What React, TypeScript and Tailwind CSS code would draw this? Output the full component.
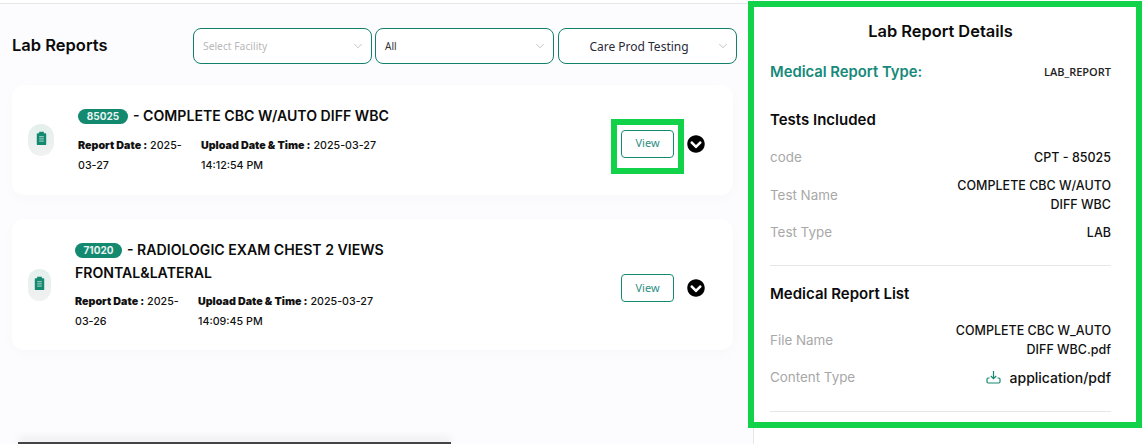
import { ChevronDown } from "lucide-react";
import { FaChevronCircleDown } from "react-icons/fa";

type Report = {
  code: string;
  badge: string;
  title: string[];
  reportDate: string[];
  upload: string[];
  highlight?: boolean;
};

const reports: Report[] = [
  {
    code: "85025",
    badge: "w-[50px]",
    title: ["- COMPLETE CBC W/AUTO DIFF WBC"],
    reportDate: ["2025-", "03-27"],
    upload: ["2025-03-27", "14:12:54 PM"],
    highlight: true,
  },
  {
    code: "71020",
    badge: "w-[47px]",
    title: ["- RADIOLOGIC EXAM CHEST 2 VIEWS", "FRONTAL&LATERAL"],
    reportDate: ["2025-", "03-26"],
    upload: ["2025-03-27", "14:09:45 PM"],
  },
];

function ClipboardIcon() {
  return (
    <svg width="11" height="14" viewBox="0 0 14 16" preserveAspectRatio="none">
      <path d="M2 2.500h2V.8h6v1.700h2a1 1 0 0 1 1 1V15a1 1 0 0 1-1 1H2a1 1 0 0 1-1-1V3.500a1 1 0 0 1 1-1z" fill="#13896f" />
      <path d="M4 6.500h6M4 9h6M4 11.500h6" stroke="#cfe6df" strokeWidth="1" />
    </svg>
  );
}

function DownloadIcon() {
  return (
    <svg width="15" height="15" viewBox="0 0 15 15" fill="none" stroke="#13896f" strokeWidth="1.2">
      <path d="M7.500 1v7.500M4.800 6l2.700 2.700L10.200 6" />
      <path d="M3.500 8H2.200a1.200 1.200 0 0 0-1.200 1.200v2.600A1.200 1.200 0 0 0 2.200 13h10.600a1.200 1.200 0 0 0 1.200-1.200V9.200A1.200 1.200 0 0 0 12.800 8H11.500" />
    </svg>
  );
}

function Select({ label, className }: { label: string; className: string }) {
  return (
    <div className="relative flex h-9 w-[179px] items-center rounded-lg border border-[#13806c] bg-white pt-[1px] font-['Noto_Sans',sans-serif]">
      <span className={className}>{label}</span>
      <ChevronDown size={14} strokeWidth={1} className="absolute right-[6px] top-[10px] text-[#9a9a9a]" />
    </div>
  );
}

function ReportCard({ report }: { report: Report }) {
  const twoLine = report.title.length > 1;
  return (
    <div
      className={`flex items-center rounded-xl bg-white shadow-[0_4px_14px_rgba(0,0,0,0.02)] ${
        twoLine ? "h-[131px]" : "h-[110px]"
      }`}
    >
      <div
        className={`ml-4 flex h-8 shrink-0 items-center justify-center rounded-full bg-gradient-to-b from-[#e4f0ed] to-[#f1f1f1] pb-1 ${
          twoLine ? "w-[23px]" : "w-[26px]"
        }`}
      >
        <ClipboardIcon />
      </div>
      <div className={`ml-6 w-[315px] ${twoLine ? "" : "mb-[1px]"}`}>
        <div className="text-[14.1px] font-semibold leading-[23px] text-[#0b0b0b]">
          <span
            className={`mr-[5px] inline-block h-[15px] rounded-full bg-[#13896f] text-center align-[1px] text-[10px] font-bold leading-[15px] text-[#e8f4f1] ${report.badge}`}
          >
            {report.code}
          </span>
          {report.title[0]}
          {twoLine && <div>{report.title[1]}</div>}
        </div>
        <div
          className={`flex text-[10.7px] font-medium leading-[20px] text-[#111] ${twoLine ? "mt-2" : "mt-[9px]"}`}
        >
          <div className="w-[123px]">
            <span className="font-black">Report Date :</span> {report.reportDate[0]}
            <br />
            {report.reportDate[1]}
          </div>
          <div>
            <span className="font-black">Upload Date &amp; Time :</span> {report.upload[0]}
            <br />
            {report.upload[1]}
          </div>
        </div>
      </div>
      <div className="ml-auto mr-[28px] mt-[7px] flex items-center">
        <div className="relative">
          <button className="block h-7 w-[53px] rounded border border-[#13896f] bg-white font-['Noto_Sans',sans-serif] text-[11px] text-[#2b8f82]">
            View
          </button>
          {report.highlight && (
            <div className="absolute -bottom-4 -left-[10px] -right-[10px] -top-[11px] border-[6px] border-[#12d24a]" />
          )}
        </div>
        <FaChevronCircleDown size={18} className="ml-[13px] text-black" />
      </div>
    </div>
  );
}

function Row({ label, value }: { label: string; value: React.ReactNode }) {
  return (
    <div className="flex items-center justify-between text-[13.4px] leading-[19px]">
      <span className="text-[#a8a8a8]">{label}</span>
      <div className="w-[190px] text-right text-[12.5px] font-medium text-[#111]">{value}</div>
    </div>
  );
}

export default function App() {
  return (
    <div className="relative flex h-[444px] w-[1143px] overflow-hidden bg-white font-[Inter,sans-serif]">
      <div className="mt-[3px] w-[753px] shrink-0 border-t border-[#e5e7eb] bg-[#fcfcfe]">
        <div className="flex h-[81px] items-start pl-3 pt-6">
          <h1 className="mt-[5px] w-[181px] text-[16.5px] font-semibold text-[#0b0b0b]">Lab Reports</h1>
          <div className="flex">
            <Select label="Select Facility" className="pl-[9px] text-[10.3px] text-[#b8b8b8]" />
            <div className="ml-[3px]">
              <Select label="All" className="pl-[9px] text-[10px] text-[#333]" />
            </div>
            <div className="ml-1">
              <Select label="Care Prod Testing" className="w-[160px] text-center text-[12px] text-[#2a2a3a]" />
            </div>
          </div>
        </div>
        <div className="flex w-[733px] flex-col gap-[24px] pl-3">
          {reports.map((r) => (
            <ReportCard key={r.code} report={r} />
          ))}
        </div>
      </div>

      <div className="w-[390px] border-l border-[#e5e7eb] bg-white pl-4 pr-8 pt-[21px]">
        <h2 className="text-center text-[16.4px] font-semibold leading-5 text-[#0b0b0b]">Lab Report Details</h2>
        <div className="mt-[21px] flex items-center justify-between leading-5">
          <span className="text-[14.8px] font-semibold text-[#16897a]">Medical Report Type:</span>
          <span className="font-['Open_Sans',sans-serif] text-[11px] font-semibold text-[#222]">LAB_REPORT</span>
        </div>
        <h3 className="mt-[28px] text-[15px] font-semibold leading-5 text-[#0b0b0b]">Tests Included</h3>
        <div className="mt-[18px] flex flex-col gap-[9px]">
          <Row label="code" value="CPT - 85025" />
          <Row
            label="Test Name"
            value={
              <>
                COMPLETE CBC W/AUTO
                <br />
                DIFF WBC
              </>
            }
          />
          <Row label="Test Type" value="LAB" />
        </div>
        <div className="mt-[23px] border-t border-[#e5e7eb]" />
        <h3 className="mt-[18px] text-[15px] font-semibold leading-5 text-[#0b0b0b]">Medical Report List</h3>
        <div className="mt-[17px] flex flex-col gap-[9px]">
          <Row
            label="File Name"
            value={
              <>
                COMPLETE CBC W_AUTO
                <br />
                DIFF WBC.pdf
              </>
            }
          />
          <Row
            label="Content Type"
            value={
              <span className="flex items-center justify-end gap-[9px] text-[14px]">
                <DownloadIcon />
                application/pdf
              </span>
            }
          />
        </div>
        <div className="mt-[24px] border-t border-[#e5e7eb]" />
      </div>

      <div className="absolute left-[748px] top-[1px] h-[427px] w-[394px] border-[6px] border-[#12d24a]" />
      <div className="absolute bottom-0 left-[18px] h-[2px] w-[433px] bg-[#444] shadow-[0_-3px_8px_rgba(0,0,0,0.2)]" />
    </div>
  );
}
